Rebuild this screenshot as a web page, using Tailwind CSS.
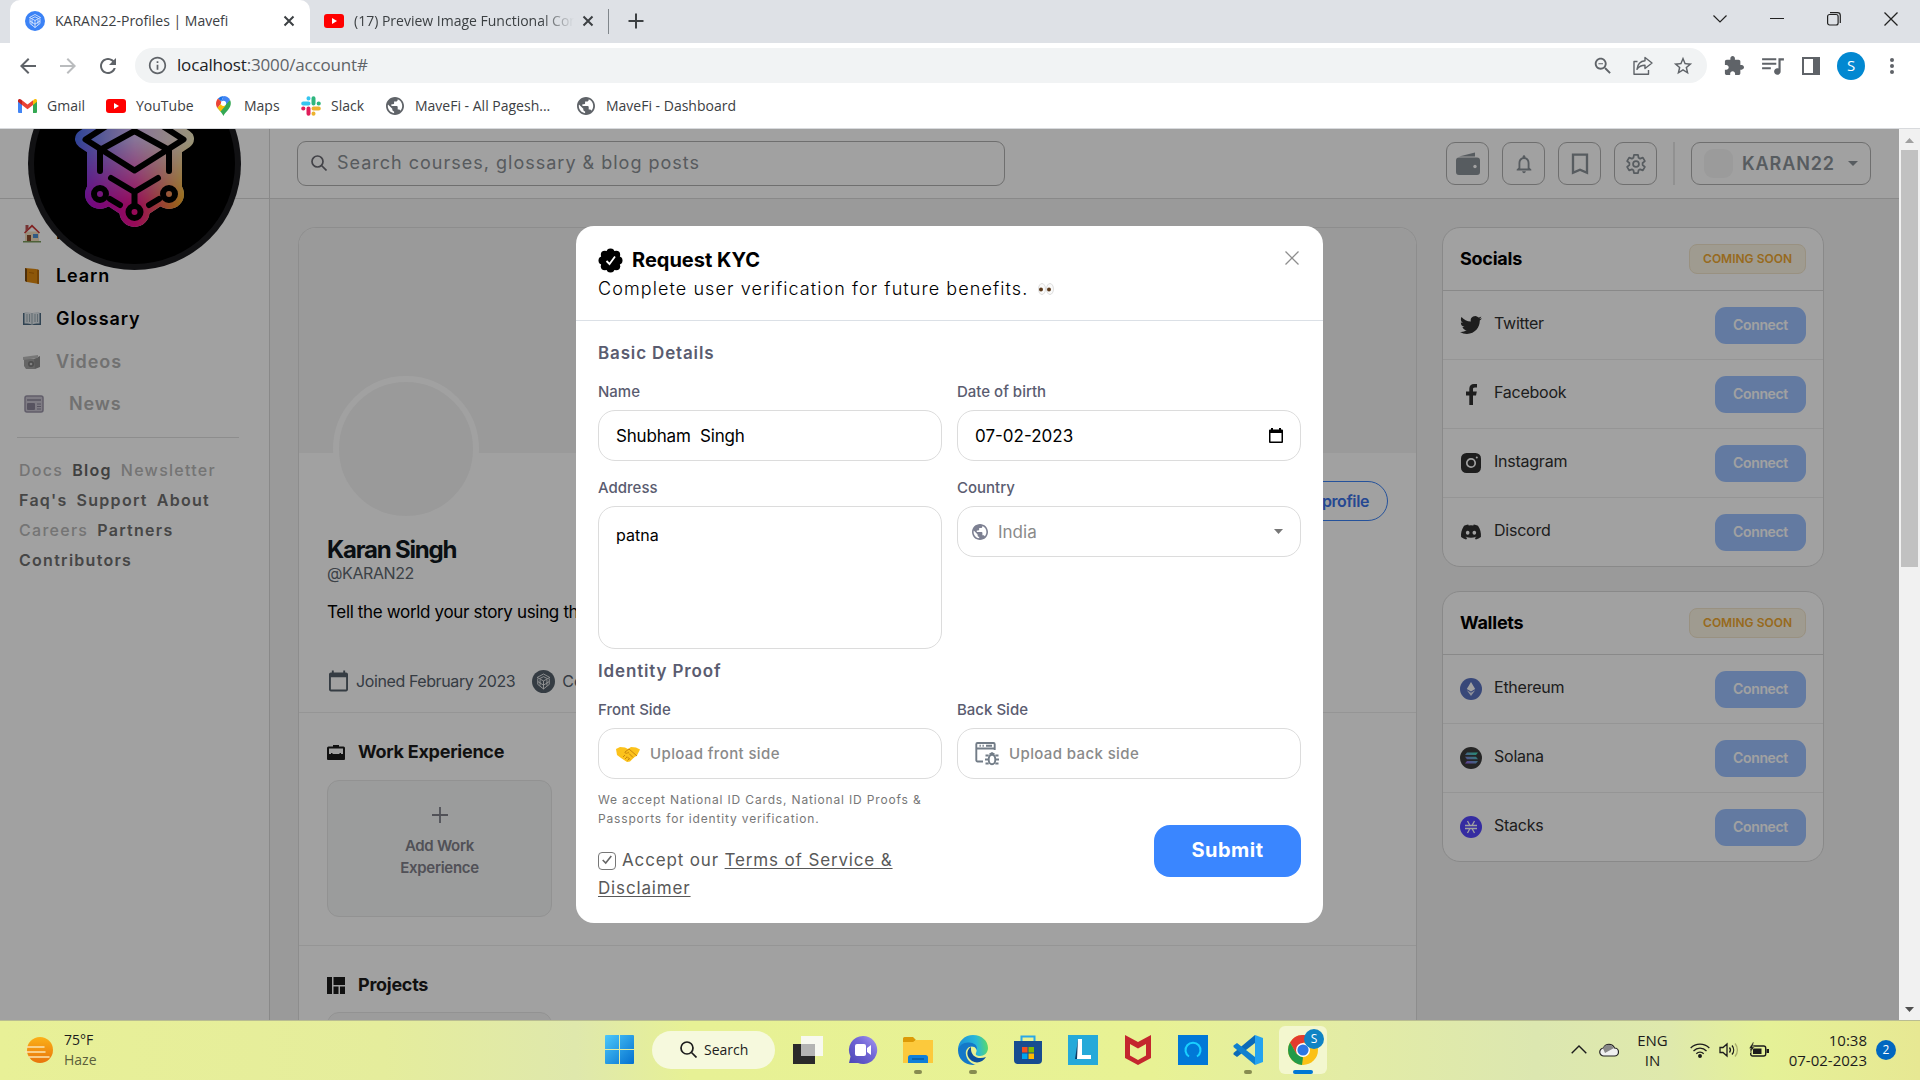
<!DOCTYPE html>
<html lang="en">
<head>
<meta charset="utf-8">
<title>KARAN22-Profiles | Mavefi</title>
<script src="https://cdn.jsdelivr.net/npm/@tailwindcss/browser@4"></script>
</head>
<body class="flex h-screen flex-col overflow-hidden font-['Open_Sans',sans-serif] text-sm text-[#3c4043]">

<!-- Shared symbols -->
<svg class="hidden">
  <symbol id="globe" viewBox="2 2 20 20"><path d="M12 2C6.48 2 2 6.48 2 12s4.48 10 10 10 10-4.48 10-10S17.52 2 12 2zm-1 17.93c-3.95-.49-7-3.85-7-7.93 0-.62.08-1.21.21-1.79L9 15v1c0 1.1.9 2 2 2v1.93zm6.9-2.54c-.26-.81-1-1.39-1.9-1.39h-1v-3c0-.55-.45-1-1-1H8v-2h2c.55 0 1-.45 1-1V7h2c1.1 0 2-.9 2-2v-.41c2.93 1.19 5 4.06 5 7.41 0 2.08-.8 3.97-2.1 5.39z"/></symbol>
  <symbol id="x" viewBox="0 0 12 12"><path d="M1.500 1.500l9 9M10.500 1.500l-9 9" fill="none" stroke="currentColor" stroke-width="2"/></symbol>
  <symbol id="thinx" viewBox="0 0 14 14"><path d="M.5.500l13 13M13.500.500l-13 13" fill="none" stroke="currentColor" stroke-width="1.300"/></symbol>
  <symbol id="yt" viewBox="0 0 20 14"><rect width="20" height="14" rx="3" fill="#f00"/><path d="M8 4l5 3-5 3z" fill="#fff"/></symbol>
  <symbol id="badge" viewBox="0 0 20 20"><circle cx="10" cy="10" r="10" fill="currentColor"/><g fill="none" stroke="#fff" stroke-width=".7"><path d="M10 3.500L15.500 6.500 10 9.500 4.500 6.500zM5 7.500v5l5 4 5-4v-5M10 9.500V16.500M5 10l5 3.200 5-3.200M7 8.500v5M13 8.500v5M6.500 7.500L10 5.800l3.500 1.700"/></g></symbol>
</svg>

<!-- Tab strip -->
<header class="shrink-0">
  <div class="flex h-[43px] items-stretch bg-[#dee1e6] pl-[10px]">
    <div class="flex w-[300px] items-center rounded-t-[10px] bg-white px-[15px] pb-0.5">
      <svg class="size-5 text-[#3b82f6]"><use href="#badge"/></svg>
      <span class="ml-[10px] flex-1 whitespace-nowrap">KARAN22-Profiles | Mavefi</span>
      <button aria-label="Close tab"><svg class="size-3"><use href="#x"/></svg></button>
    </div>
    <div class="flex w-[298px] items-center px-[14px] pb-0.5">
      <svg class="h-[14px] w-5 shrink-0"><use href="#yt"/></svg>
      <span class="ml-[10px] flex-1 overflow-hidden whitespace-nowrap mask-r-from-85%">(17) Preview Image Functional Component</span>
      <button class="ml-2" aria-label="Close tab"><svg class="size-3"><use href="#x"/></svg></button>
    </div>
    <div class="my-[9px] w-px bg-[#80868b]"></div>
    <button class="px-[19px] pb-0.5" aria-label="New tab"><svg class="size-4" viewBox="0 0 16 16"><path d="M8 0.500v15M.5 8h15" stroke="#3c4043" stroke-width="2"/></svg></button>
    <div class="ml-auto flex items-center gap-[43px] pr-[22px] pb-1.5 text-[#222]">
      <button aria-label="Search tabs"><svg class="h-2 w-[14px]" viewBox="0 0 14 8"><path d="M.5.500L7 7l6.500-6.500" fill="none" stroke="currentColor" stroke-width="1.200"/></svg></button>
      <button aria-label="Minimize"><svg class="h-3 w-[14px]" viewBox="0 0 14 12"><path d="M0 5.500h14" stroke="currentColor"/></svg></button>
      <button aria-label="Restore"><svg class="size-[14px]" viewBox="0 0 14 14" fill="none" stroke="currentColor" stroke-width="1.200"><rect x=".6" y="2.500" width="10.500" height="10.500" rx="2"/><path d="M3 .7h7.500a2.800 2.800 0 0 1 2.800 2.800V11"/></svg></button>
      <button aria-label="Close"><svg class="size-[14px]"><use href="#thinx"/></svg></button>
    </div>
  </div>

  <!-- Toolbar -->
  <div class="flex h-[45px] items-center bg-white pr-[18px] pl-4 text-[#5f6368]">
    <button aria-label="Back"><svg class="size-6" viewBox="0 0 24 24" fill="currentColor"><path d="M20 11H7.830l5.590-5.590L12 4l-8 8 8 8 1.410-1.410L7.830 13H20z"/></svg></button>
    <button class="ml-4 text-[#babcbe]" aria-label="Forward"><svg class="size-6 rotate-180" viewBox="0 0 24 24" fill="currentColor"><path d="M20 11H7.830l5.590-5.590L12 4l-8 8 8 8 1.410-1.410L7.830 13H20z"/></svg></button>
    <button class="ml-4" aria-label="Reload"><svg class="size-6" viewBox="0 0 24 24" fill="currentColor"><path d="M17.650 6.350C16.200 4.900 14.210 4 12 4c-4.420 0-7.990 3.580-7.990 8s3.570 8 7.990 8c3.730 0 6.840-2.550 7.730-6h-2.080c-.82 2.330-3.040 4-5.650 4-3.310 0-6-2.690-6-6s2.690-6 6-6c1.660 0 3.140.69 4.220 1.780L13 11h7V4l-2.350 2.350z"/></svg></button>
    <div class="ml-[15px] flex h-[35px] flex-1 items-center rounded-full bg-[#f1f3f4] pr-[13px] pl-[13px]">
      <svg class="size-[19px]" viewBox="1 1 22 22" fill="currentColor"><path d="M11 7h2v2h-2zm0 4h2v6h-2zm1-9C6.480 2 2 6.480 2 12s4.480 10 10 10 10-4.480 10-10S17.520 2 12 2zm0 18c-4.410 0-8-3.590-8-8s3.590-8 8-8 8 3.590 8 8-3.590 8-8 8z"/></svg>
      <div class="ml-[10px] flex-1 text-[17px] tracking-[-0.01em]"><span class="text-[#202124]">localhost</span>:3000/account#</div>
      <div class="flex items-center gap-[18px]">
        <svg class="size-[22px]" viewBox="0 0 24 24" fill="currentColor"><path d="M15.500 14h-.79l-.28-.27C15.410 12.590 16 11.110 16 9.500 16 5.910 13.090 3 9.500 3S3 5.910 3 9.500 5.910 16 9.500 16c1.610 0 3.090-.59 4.230-1.570l.27.28v.79l5 4.990L20.490 19l-4.990-5zm-6 0C7.010 14 5 11.990 5 9.500S7.010 5 9.500 5 14 7.010 14 9.500 11.990 14 9.500 14zM7 9h5v1H7z"/></svg>
        <svg class="size-[22px]" viewBox="0 0 22 22" fill="none" stroke="currentColor" stroke-width="1.400"><path d="M5.500 6.500H2v12.800h14.500V15M13 2.500l7 5.500-7 5.500v-3.200c-3.500 0-6 1-8 4 .5-4.500 3-8 8-8.500z" stroke-linejoin="round"/></svg>
        <svg class="size-[22px]" viewBox="0 0 24 24" fill="currentColor"><path d="M22 9.240l-7.190-.62L12 2 9.190 8.630 2 9.240l5.460 4.730L5.820 21 12 17.270 18.180 21l-1.630-7.030L22 9.240zM12 15.400l-3.760 2.270 1-4.280-3.320-2.880 4.380-.38L12 6.100l1.710 4.040 4.380.38-3.320 2.880 1 4.280L12 15.400z"/></svg>
      </div>
    </div>
    <div class="ml-[17px] flex items-center gap-[17px]">
      <svg class="size-5" viewBox="1 1 22 22" fill="currentColor"><path d="M20.500 11H19V7c0-1.100-.9-2-2-2h-4V3.500C13 2.120 11.880 1 10.500 1S8 2.120 8 3.500V5H4c-1.100 0-1.990.9-1.990 2v3.800H3.500c1.490 0 2.700 1.210 2.700 2.700s-1.210 2.700-2.700 2.700H2V20c0 1.100.9 2 2 2h3.800v-1.500c0-1.490 1.210-2.700 2.700-2.700 1.490 0 2.700 1.210 2.700 2.700V22H17c1.100 0 2-.9 2-2v-4h1.500c1.380 0 2.500-1.120 2.500-2.500S21.880 11 20.500 11z"/></svg>
      <svg class="size-6" viewBox="1 1 22 22" fill="currentColor"><path d="M15 5H2v1.800h13V5zm0 4H2v1.800h13V9zM2 15h8v-1.800H2V15zM17 5v9.180c-.31-.11-.65-.18-1-.18-1.660 0-3 1.340-3 3s1.340 3 3 3 3-1.340 3-3V7h3V5h-5z"/></svg>
      <svg class="size-[18px]" viewBox="0 0 18 18"><rect x="1" y="1" width="16" height="16" fill="none" stroke="currentColor" stroke-width="2"/><path d="M11 1h6v16h-6z" fill="currentColor"/></svg>
      <span class="flex size-7 items-center justify-center rounded-full bg-[#0288d1] text-[15px] text-white">S</span>
      <svg class="h-[18px] w-5" viewBox="0 0 20 18" fill="currentColor"><circle cx="10" cy="3" r="2"/><circle cx="10" cy="9" r="2"/><circle cx="10" cy="15" r="2"/></svg>
    </div>
  </div>

  <!-- Bookmarks bar -->
  <nav class="flex h-[41px] items-center border-b border-[#d8dadd] bg-white pb-1 pl-[18px] whitespace-nowrap">
    <a href="#" class="flex w-[88px] items-center gap-[10px]"><svg class="h-[14px] w-[19px]" viewBox="0 0 19 14"><path d="M0 1.500V13a1 1 0 0 0 1 1h3V5z" fill="#4285f4"/><path d="M19 1.500V13a1 1 0 0 1-1 1h-3V5z" fill="#34a853"/><path d="M15 1.500V6l4-3.200V1.500c0-1.500-1.800-2-3-1z" fill="#fbbc04"/><path d="M4 6V1.300L9.500 5.500 15 1.300V6l-5.500 4.200z" fill="#ea4335"/><path d="M0 1.500v1.300L4 6V1.300L3 .5c-1.200-1-3-.5-3 1z" fill="#c5221f"/></svg>Gmail</a>
    <a href="#" class="flex w-[110px] items-center gap-[10px]"><svg class="h-[14px] w-5"><use href="#yt"/></svg>YouTube</a>
    <a href="#" class="flex w-[85px] items-center gap-[13px]"><svg class="h-5 w-[15px]" viewBox="0 0 15 20"><path d="M7.500 0A7.300 7.300 0 0 0 2 2.600l3.200 2.800z" fill="#1a73e8"/><path d="M2 2.600C-.8 6-.3 9.500 1.500 12L6 6.500z" fill="#ea4335"/><path d="M14 4L5.300 9.200 1.500 12C4.500 15.500 6 17 7.500 20c1.500-4 6.500-6.500 7.200-11.500C15 6.700 14.700 5.200 14 4z" fill="#34a853"/><path d="M1.500 12l4-4.800 4 2.500L4.500 15.500z" fill="#fbbc04"/><path d="M7.500 0c3 0 5.200 1.500 6.500 4L9.500 9 5.300 5.400z" fill="#4285f4"/><circle cx="7.500" cy="7.300" r="2.600" fill="#fff"/></svg>Maps</a>
    <a href="#" class="flex w-[85px] items-center gap-[10px]"><svg class="size-5" viewBox="0 0 20 20" stroke-width="4" stroke-linecap="round"><path d="M7.500 7.500H2.200M7.500 2.200v.2" stroke="#36c5f0"/><path d="M12.500 7.500V2.200M17.600 7.500h.2" stroke="#2eb67d"/><path d="M12.500 12.500h5.300M12.500 17.600v.2" stroke="#ecb22e"/><path d="M7.500 12.500v5.300M2.400 12.500h-.2" stroke="#e01e5a"/></svg>Slack</a>
    <a href="#" class="flex w-[191px] items-center gap-[11px]"><svg class="size-[18px] fill-[#5f6368]"><use href="#globe"/></svg>MaveFi - All Pagesh...</a>
    <a href="#" class="flex items-center gap-[11px]"><svg class="size-[18px] fill-[#5f6368]"><use href="#globe"/></svg>MaveFi - Dashboard</a>
  </nav>
</header>

<!-- Page viewport -->
<div class="flex min-h-0 flex-1 font-['Inter',sans-serif]">
  <div class="relative flex-1 overflow-hidden">
    <div class="grid h-full grid-cols-[270px_1fr] bg-[#f4f4f4] text-black">

      <!-- Sidebar -->
      <aside class="relative border-r border-[#d9d9d9] bg-white">
        <div class="h-[70px] border-b border-[#d9d9d9]"></div>
        <nav class="flex flex-col gap-[15px] pt-[20px] pl-[23px] text-[18px] leading-7 font-semibold tracking-wider">
          <a href="#" class="flex items-center gap-[15px]"><svg class="h-5 w-[18px]" viewBox="0 0 18 20"><path d="M2 8.500h14V19H2z" fill="#f3dfc0"/><path d="M9 1.500L1 9.500l1 1L9 4l7 6.500 1-1z" fill="#c33"/><path d="M2.500 2h3v4l-3 2.500z" fill="#b55"/><path d="M4 12h4v7H4z" fill="#8a4b2a"/><path d="M10 11h5v4h-5z" fill="#4f8fd0"/><path d="M0 18h18v1.500H0z" fill="#7a9a5a"/></svg>Home</a>
          <a href="#" class="flex items-center gap-[15px]"><svg class="size-[18px]" viewBox="0 0 18 18"><path d="M2 1l11 1 3 1v14l-12-2-2-1z" fill="#e08a10"/><path d="M2 1l2 1v13l-2-1z" fill="#7a4a10"/><path d="M14 2.500l2 .5v14l-2-.5z" fill="#b86a08"/><path d="M6 5l5 .7v1L6 6z" fill="#b86a08"/></svg>Learn</a>
          <a href="#" class="flex items-center gap-[15px]"><svg class="h-[14px] w-[18px]" viewBox="0 0 18 14"><path d="M0 1h18v12H0z" fill="#4d6b82"/><path d="M1.500 0C5 0 8 .5 9 1.500 10 .5 13 0 16.500 0v11.500c-3.500 0-6.500.3-7.500 1.300-1-1-4-1.300-7.500-1.300z" fill="#dfe6ea"/><path d="M9 1.500v11M4 2v8M6.500 2v8M12 2v8M14.500 2v8" stroke="#9aabb5" stroke-width="1"/></svg>Glossary</a>
          <a href="#" class="flex items-center gap-[15px] text-[#b3b3b3]"><svg class="h-4 w-[18px]" viewBox="0 0 18 16"><path d="M1 5h11v10H3L1 12z" fill="#a2a2a2"/><path d="M11 5l6-3v11l-5 2z" fill="#8d8d8d"/><path d="M0 3l15-2v3L0 6z" fill="#bdbdbd"/><circle cx="8" cy="10" r="3" fill="#7c7c7c"/><circle cx="8" cy="10" r="1.300" fill="#ccc"/></svg>Videos</a>
          <a href="#" class="-mt-px flex items-center gap-6 text-[#b3b3b3]"><svg class="h-[18px] w-[22px]" viewBox="0 0 20 18"><rect x="1" y="1" width="18" height="16" rx="2" fill="#c9c5d2" stroke="#9a94a8" stroke-width="1.500"/><path d="M3 5h14" stroke="#8a8498" stroke-width="1.500"/><rect x="3" y="8" width="8" height="7" rx="1" fill="#8a8498"/><path d="M13 9h4M13 11.500h4M13 14h4" stroke="#8a8498"/></svg>News</a>
        </nav>
        <div class="mt-[19px] mr-[30px] ml-[17px] border-t border-[#e0e0e0]"></div>
        <div class="flex flex-wrap gap-x-[9px] pt-[17px] pl-[19px] text-[16px] leading-[30px] font-semibold tracking-[0.08em] text-[#707070]">
          <a href="#" class="font-medium text-[#b8b8b8]">Docs</a><a href="#" class="text-[#666]">Blog</a><a href="#" class="font-medium text-[#b8b8b8]">Newsletter</a>
          <a href="#">Faq's</a><a href="#">Support</a><a href="#" class="mr-5">About</a>
          <a href="#" class="font-medium text-[#b8b8b8]">Careers</a><a href="#">Partners</a><a href="#">Contributors</a>
        </div>
        <!-- Oversized logo spills over the navigation -->
        <svg class="absolute -top-[72px] left-7 size-[213px]" viewBox="28 57 213 213">
          <defs>
            <linearGradient id="lh" x1="75" x2="195" y1="0" y2="0" gradientUnits="userSpaceOnUse"><stop stop-color="#4b6cf0"/><stop offset=".5" stop-color="#d8b8f0"/><stop offset="1" stop-color="#f4ecc0"/></linearGradient>
            <linearGradient id="lb" x1="80" x2="190" y1="0" y2="0" gradientUnits="userSpaceOnUse"><stop stop-color="#a80cd8"/><stop offset=".5" stop-color="#f0108c"/><stop offset="1" stop-color="#f4c010"/></linearGradient>
            <linearGradient id="fade" x1="0" x2="0" y1="140" y2="205" gradientUnits="userSpaceOnUse"><stop stop-color="#fff" stop-opacity="0"/><stop offset="1" stop-color="#fff"/></linearGradient>
            <mask id="fm" maskUnits="userSpaceOnUse" x="28" y="57" width="213" height="213"><rect x="28" y="57" width="213" height="213" fill="url(#fade)"/></mask>
            <g id="sil"><path d="M134.500 108l50 31-12 8v40l-38 25-38-25v-40l-12-8z" stroke-width="19" stroke-linejoin="round"/><circle cx="100" cy="194" r="15" stroke="none"/><circle cx="169" cy="194" r="15" stroke="none"/><circle cx="134.500" cy="212" r="15" stroke="none"/></g>
          </defs>
          <circle cx="134.500" cy="163.500" r="106.500" fill="#1b1b1f"/>
          <circle cx="134.500" cy="163.500" r="100.500" fill="#000"/>
          <use href="#sil" fill="url(#lh)" stroke="url(#lh)"/>
          <use href="#sil" fill="url(#lb)" stroke="url(#lb)" mask="url(#fm)"/>
          <g fill="none" stroke="#000" stroke-width="6" stroke-linecap="round" stroke-linejoin="round"><path d="M134.500 108l49 31.500-49 31-49-31zM100 150l34.500-19 34.500 19M100 150v21M169 150v21M111 178l23.500 14 23.500-14M134.500 192v14M110 199l10 6M159 199l-10 6"/><circle cx="100" cy="194" r="6"/><circle cx="169" cy="194" r="6"/><circle cx="134.500" cy="212" r="6"/></g>
        </svg>
      </aside>

      <div class="min-w-0">
        <!-- Top bar -->
        <div class="flex h-[70px] items-center border-b border-[#d9d9d9] bg-white pr-7 pl-[27px] text-[#8b9298]">
          <label class="flex h-[45px] w-[708px] items-center gap-[10px] rounded-[9px] border border-[#b0b0b0] pb-0.5 pl-[13px]">
            <svg class="size-4 text-[#6a6a72]" viewBox="0 0 16 16" fill="none" stroke="currentColor" stroke-width="1.700"><circle cx="6.500" cy="6.500" r="5.500"/><path d="M10.500 10.500l5 5"/></svg>
            <input type="text" aria-label="Search" placeholder="Search courses, glossary &amp; blog posts" class="h-full flex-1 bg-transparent text-[18px] font-normal tracking-[1px] outline-none placeholder:text-[#8b9095]">
          </label>
          <div class="ml-auto flex items-center gap-[13px]">
            <button aria-label="Wallet" class="flex size-[43px] items-center justify-center rounded-[9px] border border-[#b0b0b0]"><svg class="size-6" viewBox="0 0 24 24" fill="currentColor"><path d="M3 4.500L19 .5v4H2.500zM3 5.500h18a3 3 0 0 1 3 3V20a3 3 0 0 1-3 3H3a3 3 0 0 1-3-3V8.500a3 3 0 0 1 3-3z"/><circle cx="19" cy="14.500" r="1.700" fill="#fff"/></svg></button>
            <button aria-label="Notifications" class="flex size-[43px] items-center justify-center rounded-[9px] border border-[#b0b0b0]"><svg class="size-[22px]" viewBox="0 0 24 24" fill="currentColor"><path d="M12 22c1.100 0 2-.9 2-2h-4c0 1.100.9 2 2 2zm6-6v-5c0-3.070-1.630-5.640-4.500-6.320V4c0-.83-.67-1.500-1.500-1.500s-1.500.67-1.500 1.500v.68C7.640 5.360 6 7.920 6 11v5l-2 2v1h16v-1l-2-2zm-2 1H8v-6c0-2.480 1.510-4.500 4-4.500s4 2.020 4 4.500v6z"/></svg></button>
            <button aria-label="Bookmarks" class="flex size-[43px] items-center justify-center rounded-[9px] border border-[#b0b0b0]"><svg class="size-7" viewBox="0 0 24 24" fill="currentColor"><path d="M19 3H5v18l7-3 7 3V3zm-2 15l-5-2.180L7 18V5h10v13z"/></svg></button>
            <button aria-label="Settings" class="flex size-[43px] items-center justify-center rounded-[9px] border border-[#b0b0b0]"><svg class="size-[22px]" viewBox="0 0 24 24" fill="none" stroke="currentColor" stroke-width="1.900" stroke-linejoin="round"><circle cx="12" cy="12" r="3.200"/><path d="M9.800 2h4.400l.6 3.200 1.700 1 3-1.200 2.200 3.800-2.500 2.100v2.200l2.500 2.100-2.200 3.800-3-1.200-1.700 1-.6 3.200H9.800l-.6-3.200-1.700-1-3 1.200-2.200-3.800 2.500-2.100v-2.200L2.300 8.800 4.500 5l3 1.200 1.700-1z"/></svg></button>
            <div class="mr-[3px] ml-[3px] h-[43px] w-0.5 bg-[#e6e6e6]"></div>
            <button class="flex h-[43px] w-[180px] items-center rounded-[9px] border border-[#b0b0b0] px-3 text-[18px] font-semibold tracking-wider"><span class="size-[29px] rounded-[9px] bg-[#f6f6f6]"></span><span class="ml-[9px] flex-1 text-left">KARAN22</span><svg class="h-[5px] w-[10px]" viewBox="0 0 10 5" fill="currentColor"><path d="M0 0h10L5 5z"/></svg></button>
          </div>
        </div>

        <div class="flex items-start gap-[25px] pt-7 pr-[75px] pl-7">
          <!-- Profile card -->
          <main class="min-w-0 flex-1 overflow-hidden rounded-t-[18px] border border-b-0 border-[#e0e0e0] bg-white">
            <div class="h-[225px] bg-[#f4f4f4]"></div>
            <section class="border-b border-[#ececec] px-7 pb-[19px]">
              <div class="-mt-[77px] flex items-end justify-between">
                <div class="ml-1.5 size-[146px] rounded-full border-6 border-white bg-[#f4f4f4]"></div>
                <button class="mb-px h-10 rounded-full border border-[#3b82f6] px-[18px] text-[16px] font-semibold tracking-tight text-[#3b72e8]">Edit profile</button>
              </div>
              <h1 class="mt-[14px] text-[24px] leading-7 font-bold tracking-tighter text-[#111820]">Karan Singh</h1>
              <p class="-mt-px text-[16px] leading-5 tracking-tight text-[#606870]">@KARAN22</p>
              <p class="mt-[17px] text-[17px] leading-6 tracking-[-0.02em]">Tell the world your story using the bio section</p>
              <div class="mt-[45px] flex items-center text-[16px] leading-6 text-[#55606b]">
                <svg class="mx-0.5 h-[22px] w-[19px]" viewBox="2 1 20 22" fill="currentColor"><path d="M20 3h-1V1h-2v2H7V1H5v2H4c-1.100 0-2 .9-2 2v16c0 1.100.9 2 2 2h16c1.100 0 2-.9 2-2V5c0-1.100-.9-2-2-2zm0 18H4V8h16v13z"/></svg>
                <span class="ml-[6px] tracking-tight">Joined February 2023</span>
                <svg class="ml-[17px] size-[23px]"><use href="#badge"/></svg><span class="ml-[7px]">Contributor</span>
              </div>
            </section>
            <section class="border-b border-[#ececec] px-7 pt-[25px] pb-7">
              <h2 class="flex items-center gap-[13px] text-[18px] leading-7 font-bold tracking-[-0.015em] text-[#1c1c1c]"><svg class="h-[15px] w-[18px]" viewBox="0 0 18 15" fill="currentColor"><path fill-rule="evenodd" d="M6 0h6v1.500h4.500A1.500 1.500 0 0 1 18 3v11a1 1 0 0 1-1 1H1a1 1 0 0 1-1-1V3a1.500 1.500 0 0 1 1.500-1.500H6zM2 3.500V9h2V8h1.500v1h7V8H14v1h2V3.500z"/></svg>Work Experience</h2>
              <button class="mt-[14px] flex h-[137px] w-[225px] flex-col items-center rounded-xl border border-[#e8e8e8] bg-[#f5f7f7] pt-[26px] text-[15px] leading-[22px] font-semibold tracking-[-0.02em] text-[#80808a]">
                <svg class="mb-3 size-4 shrink-0" viewBox="0 0 16 16"><path d="M8 0v16M0 8h16" stroke="currentColor" stroke-width="1.800"/></svg>Add Work<br>Experience
              </button>
            </section>
            <section class="px-7 pt-[25px]">
              <h2 class="flex items-center gap-[13px] text-[18px] leading-7 font-bold tracking-[-0.015em] text-[#1c1c1c]"><svg class="h-[17px] w-[18px]" viewBox="0 0 18 17" fill="currentColor"><path d="M0 0h5v17H0zM6.500 0H18v8H6.500zM6.500 9.500h5V17h-5zM13 9.500h5V17h-5z"/></svg>Projects</h2>
              <div class="mt-[13px] h-[137px] w-[225px] rounded-xl border border-[#e8e8e8] bg-[#f8f8f8]"></div>
            </section>
          </main>

          <!-- Right rail -->
          <div class="flex w-[382px] shrink-0 flex-col gap-6 text-[16px] tracking-[-0.015em] text-[#303030]">
            <section class="rounded-[18px] border border-[#dadada] bg-white">
              <div class="flex h-[62px] items-center justify-between px-[17px]"><h2 class="text-[18px] font-bold text-black">Socials</h2><span class="flex h-[30px] items-center rounded-lg border border-[#f2e6cc] bg-[#fcf5e4] px-[13px] text-[12px] font-semibold tracking-normal text-[#f0a830]">COMING SOON</span></div>
              <div class="flex h-[69px] items-center border-t border-[#dadada] px-[17px]"><svg class="size-[22px]" viewBox="0 0 24 24" fill="currentColor"><path d="M23.953 4.570a10 10 0 01-2.825.775 4.958 4.958 0 002.163-2.723c-.951.555-2.005.959-3.127 1.184a4.920 4.920 0 00-8.384 4.482C7.690 8.095 4.067 6.130 1.640 3.162a4.822 4.822 0 00-.666 2.475c0 1.710.87 3.213 2.188 4.096a4.904 4.904 0 01-2.228-.616v.06a4.923 4.923 0 003.946 4.827 4.996 4.996 0 01-2.212.085 4.936 4.936 0 004.604 3.417 9.867 9.867 0 01-6.102 2.105c-.39 0-.779-.023-1.170-.067a13.995 13.995 0 007.557 2.209c9.053 0 13.998-7.496 13.998-13.985 0-.21 0-.42-.015-.63A9.935 9.935 0 0024 4.590z"/></svg><span class="ml-3 flex-1 pb-1">Twitter</span><button class="h-[37px] w-[91px] rounded-[11px] bg-[#9dc2ff] text-[14px] font-semibold tracking-tight text-white">Connect</button></div>
              <div class="flex h-[69px] items-center border-t border-[#ececec] px-[17px]"><svg class="size-[22px]" viewBox="1 1 22 22" fill="currentColor"><path d="M14 13.500h3l.8-4H14v-2c0-1.030 0-2 2-2h2V2c-.5 0-1.800-.1-3-.1-2.800 0-4.700 1.600-4.700 4.800v2.800H7v4h3.300V23H14z"/></svg><span class="ml-3 flex-1 pb-1">Facebook</span><button class="h-[37px] w-[91px] rounded-[11px] bg-[#9dc2ff] text-[14px] font-semibold tracking-tight text-white">Connect</button></div>
              <div class="flex h-[69px] items-center border-t border-[#ececec] px-[17px]"><svg class="size-[22px]" viewBox="0 0 22 22" fill="currentColor"><rect x="1" y="1" width="20" height="20" rx="5.500"/><circle cx="11" cy="11" r="4.200" fill="none" stroke="#fff" stroke-width="1.700"/><circle cx="16.800" cy="5.500" r="1" fill="#fff"/></svg><span class="ml-3 flex-1 pb-1">Instagram</span><button class="h-[37px] w-[91px] rounded-[11px] bg-[#9dc2ff] text-[14px] font-semibold tracking-tight text-white">Connect</button></div>
              <div class="flex h-[69px] items-center border-t border-[#ececec] px-[17px]"><svg class="h-5 w-[22px]" viewBox="0 0 24 24" fill="currentColor"><path d="M20.317 4.370a19.791 19.791 0 0 0-4.885-1.515.074.074 0 0 0-.079.037c-.21.375-.444.864-.608 1.250a18.270 18.270 0 0 0-5.487 0 12.640 12.640 0 0 0-.617-1.250.077.077 0 0 0-.079-.037A19.736 19.736 0 0 0 3.677 4.370a.07.07 0 0 0-.032.027C.533 9.046-.32 13.580.099 18.057a.082.082 0 0 0 .031.057 19.900 19.900 0 0 0 5.993 3.030.078.078 0 0 0 .084-.028 14.090 14.090 0 0 0 1.226-1.994.076.076 0 0 0-.041-.106 13.107 13.107 0 0 1-1.872-.892.077.077 0 0 1-.008-.128 10.200 10.200 0 0 0 .372-.292.074.074 0 0 1 .077-.01c3.928 1.793 8.180 1.793 12.062 0a.074.074 0 0 1 .078.01c.12.098.246.198.373.292a.077.077 0 0 1-.006.127 12.299 12.299 0 0 1-1.873.892.077.077 0 0 0-.041.107c.36.698.772 1.362 1.225 1.993a.076.076 0 0 0 .084.028 19.839 19.839 0 0 0 6.002-3.030.077.077 0 0 0 .032-.054c.5-5.177-.838-9.674-3.549-13.660a.061.061 0 0 0-.031-.03zM8.020 15.330c-1.183 0-2.157-1.085-2.157-2.419 0-1.333.956-2.419 2.157-2.419 1.210 0 2.176 1.096 2.157 2.420 0 1.333-.956 2.418-2.157 2.418zm7.975 0c-1.183 0-2.157-1.085-2.157-2.419 0-1.333.955-2.419 2.157-2.419 1.210 0 2.176 1.096 2.157 2.420 0 1.333-.946 2.418-2.157 2.418z"/></svg><span class="ml-3 flex-1 pb-1">Discord</span><button class="h-[37px] w-[91px] rounded-[11px] bg-[#9dc2ff] text-[14px] font-semibold tracking-tight text-white">Connect</button></div>
            </section>
            <section class="rounded-[18px] border border-[#dadada] bg-white">
              <div class="flex h-[62px] items-center justify-between px-[17px]"><h2 class="text-[18px] font-bold text-black">Wallets</h2><span class="flex h-[30px] items-center rounded-lg border border-[#f2e6cc] bg-[#fcf5e4] px-[13px] text-[12px] font-semibold tracking-normal text-[#f0a830]">COMING SOON</span></div>
              <div class="flex h-[69px] items-center border-t border-[#dadada] px-[17px]"><svg class="size-[22px]" viewBox="0 0 22 22"><circle cx="11" cy="11" r="11" fill="#5a72c0"/><path d="M11 4l4.200 7L11 13.500 6.800 11z" fill="#fff"/><path d="M6.800 12.300L11 14.800l4.200-2.500L11 18z" fill="#e0e4f4"/></svg><span class="ml-3 flex-1 pb-1">Ethereum</span><button class="h-[37px] w-[91px] rounded-[11px] bg-[#9dc2ff] text-[14px] font-semibold tracking-tight text-white">Connect</button></div>
              <div class="flex h-[69px] items-center border-t border-[#ececec] px-[17px]"><svg class="size-[22px]" viewBox="0 0 22 22"><defs><linearGradient id="sol" x1="16" y1="5" x2="6" y2="17" gradientUnits="userSpaceOnUse"><stop stop-color="#3de0b8"/><stop offset="1" stop-color="#9a60e8"/></linearGradient></defs><circle cx="11" cy="11" r="11" fill="#3c3c3c"/><path d="M7 5.500h11L16 8H5zM5 9.700h11l2 2.600H7zM7 14h11l-2 2.500H5z" fill="url(#sol)"/></svg><span class="ml-3 flex-1 pb-1">Solana</span><button class="h-[37px] w-[91px] rounded-[11px] bg-[#9dc2ff] text-[14px] font-semibold tracking-tight text-white">Connect</button></div>
              <div class="flex h-[69px] items-center border-t border-[#ececec] px-[17px]"><svg class="size-[22px]" viewBox="0 0 22 22"><circle cx="11" cy="11" r="11" fill="#5546ff"/><path d="M5 9.500h12M5 12.500h12M7.500 5l2.500 4.500M14.500 5L12 9.500M7.500 17l2.500-4.500M14.500 17L12 12.500" stroke="#fff" stroke-width="1.300" fill="none"/></svg><span class="ml-3 flex-1 pb-1">Stacks</span><button class="h-[37px] w-[91px] rounded-[11px] bg-[#9dc2ff] text-[14px] font-semibold tracking-tight text-white">Connect</button></div>
            </section>
          </div>
        </div>
      </div>
    </div>

    <!-- Dimmed backdrop and KYC dialog -->
    <div class="absolute inset-0 flex items-center justify-center bg-black/37">
      <form role="dialog" aria-label="Request KYC" class="w-[747px] rounded-[18px] bg-white text-[#5a5c70]">
        <div class="flex items-start justify-between border-b border-[#dbe0e6] pt-5 pr-[24px] pb-[17px] pl-[22px] text-black">
          <div>
            <h2 class="flex h-7 items-center gap-[9px] text-[20px] font-bold"><svg class="size-[25px]" viewBox="0 0 25 25"><g><circle cx="12.500" cy="12.500" r="10"/><circle cx="12.500" cy="4.500" r="4"/><circle cx="12.500" cy="20.500" r="4"/><circle cx="4.500" cy="12.500" r="4"/><circle cx="20.500" cy="12.500" r="4"/><circle cx="6.800" cy="6.800" r="4"/><circle cx="18.200" cy="6.800" r="4"/><circle cx="6.800" cy="18.200" r="4"/><circle cx="18.200" cy="18.200" r="4"/></g><path d="M8.500 13l3 3 5.500-7.500" fill="none" stroke="#fff" stroke-width="1.800"/></svg>Request KYC</h2>
            <p class="mt-px flex items-center gap-[10px] text-[18px] leading-7 font-light tracking-[0.06em] text-black">Complete user verification for future benefits. <svg class="h-3 w-4" viewBox="0 0 16 12"><g fill="#fafafa" stroke="#d6d6d6" stroke-width=".8"><ellipse cx="4" cy="6" rx="3.500" ry="5.500"/><ellipse cx="12" cy="6" rx="3.500" ry="5.500"/></g><circle cx="3" cy="6.500" r="2" fill="#5b3a1c"/><circle cx="11" cy="6.500" r="2" fill="#5b3a1c"/></svg></p>
          </div>
          <button type="button" aria-label="Close" class="mt-[5px] text-[#8e8e8e]"><svg class="size-[14px]"><use href="#thinx"/></svg></button>
        </div>
        <div class="px-[22px] pt-[18px] pb-[21px]">
          <h3 class="text-[17px] leading-7 font-semibold tracking-wider">Basic Details</h3>
          <div class="mt-[15px] grid grid-cols-2 gap-x-[15px] gap-y-[17px] text-[15px] leading-5 font-medium">
            <div><label for="name" class="block">Name</label><input id="name" type="text" value="Shubham  Singh" class="mt-2 block h-[51px] w-full rounded-[17px] border border-[#dcdcdc] px-[17px] text-[17px] font-normal tracking-[-0.01em] text-black"></div>
            <div><label for="dob" class="block">Date of birth</label>
              <div class="mt-2 flex h-[51px] items-center rounded-[17px] border border-[#dcdcdc] px-[17px]"><input id="dob" type="text" value="07-02-2023" class="w-full min-w-0 flex-1 text-[17px] font-normal text-black"><button type="button" aria-label="Pick a date"><svg class="h-[15px] w-[14px]" viewBox="0 0 14 15"><path fill-rule="evenodd" d="M1 1.500h1V0h2v1.500h6V0h2v1.500h1a1 1 0 0 1 1 1V14a1 1 0 0 1-1 1H1a1 1 0 0 1-1-1V2.500a1 1 0 0 1 1-1zM1.500 5v8.500h11V5z"/></svg></button></div></div>
            <div><label for="addr" class="block">Address</label><textarea id="addr" class="mt-2 block h-[143px] w-full resize-none rounded-[17px] border border-[#dcdcdc] px-[17px] pt-[18px] text-[16px] font-normal text-black">patna</textarea></div>
            <div><label for="country" class="block">Country</label>
              <div class="mt-2 flex h-[51px] items-center rounded-[17px] border border-[#dcdcdc] px-[14px]"><svg class="size-4 fill-[#7d8092]"><use href="#globe"/></svg><select id="country" class="ml-[10px] flex-1 appearance-none text-[17px] font-normal text-[#8a8a8a]"><option>India</option></select><svg class="mr-[3px] h-[5px] w-[9px]" viewBox="0 0 9 5"><path d="M0 0h9L4.500 5z" fill="#777"/></svg></div></div>
          </div>
          <h3 class="mt-2 text-[17px] leading-7 font-semibold tracking-wider">Identity Proof</h3>
          <div class="mt-[15px] grid grid-cols-2 gap-x-[15px] text-[15px] leading-5 font-medium">
            <label class="relative block">Front Side<input type="file" class="sr-only"><span class="mt-2 flex h-[51px] items-center rounded-[17px] border border-[#dcdcdc] px-[17px] tracking-wide text-[#8a8a8a]"><svg class="mr-[10px] h-4 w-6" viewBox="0 0 24 16"><path d="M0 3l4-2 5 .5L12 3l3-2 5 .5 4 2-3 6-3 2-4 4-3 .5-6-4-4-3z" fill="#fcc21b"/><path d="M9 6l4-3 8 7M7 11l2-2M9 13l2-2M11.500 14.500l2-2M14 13.500l-3-3M17 11.500l-4-4M9 6c0 2 2 1.500 4 0" fill="none" stroke="#c9860d" stroke-width="1"/></svg>Upload front side</span></label>
            <label class="relative block">Back Side<input type="file" class="sr-only"><span class="mt-2 flex h-[51px] items-center rounded-[17px] border border-[#dcdcdc] px-[17px] tracking-wide text-[#8a8a8a]"><svg class="mr-[10px] size-6" viewBox="0 0 24 24" fill="none" stroke="#727c87" stroke-width="1.900"><path d="M8 19.500H2.500a1.200 1.200 0 0 1-1.200-1.200V2.200A1.200 1.200 0 0 1 2.500 1h16a1.200 1.200 0 0 1 1.200 1.200V8M1 6.500h19M4.500 3.800h1.300M7.500 3.800h1.300M11 3.800h6"/><ellipse cx="17" cy="17.500" rx="3.300" ry="4.800"/><path d="M10.500 13.500h3.200M20.300 13.500h3.200M10 17.500h3.700M20.300 17.500H24M10.500 21.500h3.200M20.300 21.500h3.200M14.500 12.500l2.500-1.500 2.500 1.500"/></svg>Upload back side</span></label>
          </div>
          <div class="grid grid-cols-2 items-start gap-x-[15px]">
            <div>
              <p class="mt-[11px] text-[12px] leading-[19px] tracking-[0.07em] text-[#777]">We accept National ID Cards, National ID Proofs &amp; Passports for identity verification.</p>
              <p class="mt-[18px] text-[17px] leading-7 tracking-wider text-[#595959]"><span class="relative mr-[6px] inline-block size-[18px] align-[-4px]"><input id="tos" type="checkbox" checked class="block size-[18px] appearance-none rounded-[4px] border border-[#777]"><svg class="pointer-events-none absolute top-[3px] left-1 size-[10px]" viewBox="0 0 10 10"><path d="M.7 5l3 3L9.300 1" fill="none" stroke="#666" stroke-width="1.600"/></svg></span><label for="tos">Accept our <a href="#" class="underline underline-offset-2">Terms of Service &amp; Disclaimer</a></label></p>
            </div>
            <button type="submit" class="mt-[46px] h-[52px] w-[147px] justify-self-end rounded-[16px] bg-[#3a86ff] pb-0.5 text-[20px] font-bold tracking-wide text-white">Submit</button>
          </div>
        </div>
      </form>
    </div>
  </div>

  <!-- Scrollbar -->
  <div class="flex w-[21px] shrink-0 flex-col items-center bg-[#f1f1f1]">
    <svg class="mt-[9px] h-[5px] w-[9px]" viewBox="0 0 9 5"><path d="M0 5h9L4.500 0z" fill="#a0a0a0"/></svg>
    <div class="mt-[7px] h-[417px] w-[17px] bg-[#c1c1c1]"></div>
    <svg class="mt-auto mb-[8px] h-[5px] w-[9px]" viewBox="0 0 9 5"><path d="M0 0h9L4.500 5z" fill="#505050"/></svg>
  </div>
</div>

<!-- Taskbar -->
<footer class="grid h-[60px] shrink-0 grid-cols-[1fr_auto_1fr] items-center border-t border-[#b9bd92] bg-[linear-gradient(90deg,#e8f097_0%,#e5ed9c_20%,#dfe8ac_30%,#e7f195_36%,#e8f294_60%,#e3eca5_70%,#dce7b0_80%,#dfe9ac_87%,#e5f197_92%,#e7e893_100%)] pb-0.5 text-[#1c1c1c]">
  <div class="flex items-center gap-[11px] pl-[25px] leading-5">
    <svg class="size-7" viewBox="0 0 28 28"><defs><linearGradient id="sun" x1="0" x2="0" y1="0" y2="1"><stop stop-color="#fbb018"/><stop offset="1" stop-color="#e8740c"/></linearGradient></defs><circle cx="15" cy="14" r="13" fill="url(#sun)"/><path d="M2 11h17M0 16h20M4 21h20" stroke="#fbe3b0" stroke-width="1.500" stroke-linecap="round"/></svg>
    <div>75°F<div class="text-[#5c5f3c]">Haze</div></div>
  </div>

  <div class="flex items-center pl-3">
    <button aria-label="Start"><svg class="size-[29px]" viewBox="0 0 29 29"><defs><linearGradient id="win" x1="0" y1="0" x2="1" y2="1"><stop stop-color="#4cc8fa"/><stop offset="1" stop-color="#0470cf"/></linearGradient></defs><path d="M1 0h13v14H0V1a1 1 0 0 1 1-1zM15 0h13a1 1 0 0 1 1 1v13H15zM0 15h14v14H1a1 1 0 0 1-1-1zM15 15h14v13a1 1 0 0 1-1 1H15z" fill="url(#win)"/></svg></button>
    <button class="ml-[18px] flex h-[38px] w-[123px] items-center gap-[7px] rounded-full bg-[#f6f9dd] pl-7 text-[14px]"><svg class="size-[17px]" viewBox="0 0 17 17" fill="none" stroke="currentColor" stroke-width="1.700"><circle cx="7" cy="7" r="6"/><path d="M11.500 11.500L16.500 16.500"/></svg>Search</button>
    <div class="ml-[18px] flex items-center gap-[25px]">
      <svg class="size-[30px]" viewBox="0 0 30 30"><path d="M0 9h22v20H0z" fill="#2a2a2a"/><path d="M8 1h22v20H8z" fill="#fafafa" opacity=".9"/><path d="M8 9h14v12H8z" fill="#b4b4b4"/></svg>
      <svg class="size-[30px]" viewBox="0 0 30 30"><defs><linearGradient id="ch" x1="0" y1="1" x2="1" y2="0"><stop stop-color="#4b45b5"/><stop offset=".6" stop-color="#7468d8"/><stop offset="1" stop-color="#a89cf0"/></linearGradient></defs><path d="M15 1a14 14 0 1 1-5 27H1l1.500-6.500A14 14 0 0 1 15 1z" fill="url(#ch)"/><rect x="7" y="9" width="11" height="12" rx="2" fill="#fff"/><path d="M19 13l4-3v10l-4-3z" fill="#fff"/></svg>
      <div class="relative"><svg class="size-[30px]" viewBox="0 0 30 30"><path d="M0 3.500A1.500 1.500 0 0 1 1.500 2H10l3 3-3 3H0z" fill="#dc9a07"/><path d="M0 7h10l3-2h17v23H0z" fill="#fcc93c"/><path d="M5 22.500A2.500 2.500 0 0 1 7.500 20h15a2.500 2.500 0 0 1 2.500 2.500V28H5z" fill="#0f7fd8"/><path d="M9 24h12" stroke="#075aa0" stroke-width="1.500"/></svg><span class="absolute top-[35px] left-[11px] h-1 w-2 rounded-full bg-[#878c50]"></span></div>
      <div class="relative"><svg class="size-[30px]" viewBox="0 0 30 30"><defs><linearGradient id="eg" x1="0" x2="1" y1=".3" y2=".2"><stop stop-color="#1b8fd8"/><stop offset=".6" stop-color="#28b8d8"/><stop offset="1" stop-color="#5edc60"/></linearGradient></defs><path d="M0 15C0 6 7 0 15 0c9 0 15 6 15 13 0 5-4 8-8 8-3 0-5-1-4-3 2-4-1-7-5-7-7 0-13 4-13 4z" fill="url(#eg)"/><path d="M0 15c1-5 6-8 11-7.500C17 8 20 11 18.500 15c0 0-.5-3.500-4.500-3.500C9 11.500 6 17 9 23c2 4 6 6.500 9 6.500-9 2-18-4-18-14.500z" fill="#1478c8"/><path d="M13 12c-5 3-5 10 1 14 5 3 11 1 14-4-7 3-16 0-15-10z" fill="#0c509c"/></svg><span class="absolute top-[35px] left-[11px] h-1 w-2 rounded-full bg-[#878c50]"></span></div>
      <svg class="size-[30px]" viewBox="0 0 30 30"><path d="M8.500 7V1.500h13V7" fill="none" stroke="#28a8e8" stroke-width="2"/><path d="M1 6h28v19a4 4 0 0 1-4 4H5a4 4 0 0 1-4-4z" fill="#174c90"/><path d="M9 12h5.500v5.500H9z" fill="#f25022"/><path d="M15.500 12H21v5.500h-5.500z" fill="#7fba00"/><path d="M9 18.500h5.500V24H9z" fill="#00a4ef"/><path d="M15.500 18.500H21V24h-5.500z" fill="#ffb900"/></svg>
      <svg class="size-[30px]" viewBox="0 0 30 30"><path d="M0 0h30v30H0z" fill="#25a9d9"/><path d="M10 5l-3 19 5 0z" fill="#0c3c66"/><path d="M10 4h4v16h9v4H9z" fill="#fff"/></svg>
      <svg class="size-[30px]" viewBox="0 0 30 30"><path d="M2 0l13 7L28 0v23l-13 7L2 23z" fill="#c4262e"/><path d="M7 9l8 4.500L23 9v11.500L15 25l-8-4.500z" fill="#e9f293"/></svg>
      <svg class="size-[30px]" viewBox="0 0 30 30"><path d="M0 0h30v30H0z" fill="#0078d7"/><path d="M11 21.500a7.500 7.500 0 1 1 8 0" fill="none" stroke="#19d0ff" stroke-width="2"/></svg>
      <div class="relative"><svg class="size-[30px]" viewBox="0 0 30 30"><path d="M22 0l8 3v24l-8 3z" fill="#24a3f0"/><path d="M22 0v8L4 22 .5 19.500V18z" fill="#0a6ab8"/><path d="M22 30v-8L4 8 .5 10.500V12z" fill="#0f80cf"/></svg><span class="absolute top-[35px] left-[11px] h-1 w-2 rounded-full bg-[#878c50]"></span></div>
    </div>
    <div class="relative ml-4 flex h-12 w-12 items-center justify-center rounded-md bg-[#f3f7cf]">
      <svg class="size-[30px]" viewBox="0 0 30 30"><circle cx="15" cy="15" r="15" fill="#fbc116"/><path d="M15 15L2 7.500A15 15 0 0 1 28 7.500H15z" fill="#e33b2e"/><path d="M2 7.500L8.500 18.700 15 8z" fill="#e33b2e"/><path d="M2 7.500L8.500 18.700l6.500 3.800-1 7.400A15 15 0 0 1 2 7.500z" fill="#229a48"/><circle cx="15" cy="15" r="7" fill="#fff"/><circle cx="15" cy="15" r="5.600" fill="#2b76e5"/></svg>
      <span class="absolute top-[3px] right-[3px] flex size-5 items-center justify-center rounded-full bg-[#0f83c4] text-[12px] text-white">S</span>
      <span class="absolute bottom-0 left-[14px] h-1 w-5 rounded-full bg-[#0078d4]"></span>
    </div>
  </div>

  <div class="flex items-center justify-end pr-6 text-[15px] leading-5">
    <svg class="h-[9px] w-4" viewBox="0 0 16 9"><path d="M.7 8.300L8 1l7.300 7.300" fill="none" stroke="currentColor" stroke-width="1.400"/></svg>
    <svg class="ml-3 h-[14px] w-5" viewBox="0 0 20 14"><path d="M5 13a4 4 0 0 1-.5-8A6 6 0 0 1 15.500 5 4 4 0 0 1 15.500 13z" fill="#f0f0f0" stroke="#222" stroke-width="1.200"/><path d="M4 5.500A6 6 0 0 1 15 5l-9 5z" fill="#888"/></svg>
    <div class="ml-[18px] text-center">ENG<br>IN</div>
    <svg class="ml-[22px] h-4 w-5" viewBox="0 0 20 16" fill="none" stroke="currentColor" stroke-width="1.300"><path d="M.7 6a13 13 0 0 1 18.600 0M3.500 9a9 9 0 0 1 13 0M6.300 11.700a5.500 5.500 0 0 1 7.400 0"/><circle cx="10" cy="14" r="1.300" fill="currentColor"/></svg>
    <svg class="ml-[9px] h-4 w-5" viewBox="0 0 20 16" fill="none" stroke="currentColor" stroke-width="1.300"><path d="M1 5.500h3L8 2v12l-4-3.500H1zM10.500 5.500a4 4 0 0 1 0 5M13 3.500a7 7 0 0 1 0 9"/><path d="M16 1.500a10 10 0 0 1 0 13" stroke="#a8ad6c"/></svg>
    <svg class="ml-[10px] h-4 w-5" viewBox="0 0 20 16"><rect x="1.700" y="4" width="15" height="10" rx="2" fill="none" stroke="currentColor" stroke-width="1.400"/><path d="M4 6.500h8.500V12H4z" fill="currentColor"/><path d="M17.500 7H20v4h-2.500z" fill="currentColor"/><path d="M4 0L0 6.500h2L1 11l4.500-6H3.500L5 0z" fill="currentColor" stroke="#e4ef98" stroke-width=".5"/></svg>
    <div class="ml-5 text-right">10:38<br>07-02-2023</div>
    <span class="ml-[9px] flex size-5 items-center justify-center rounded-full bg-[#0067c0] text-[12px] text-white">2</span>
  </div>
</footer>
</body>
</html>
